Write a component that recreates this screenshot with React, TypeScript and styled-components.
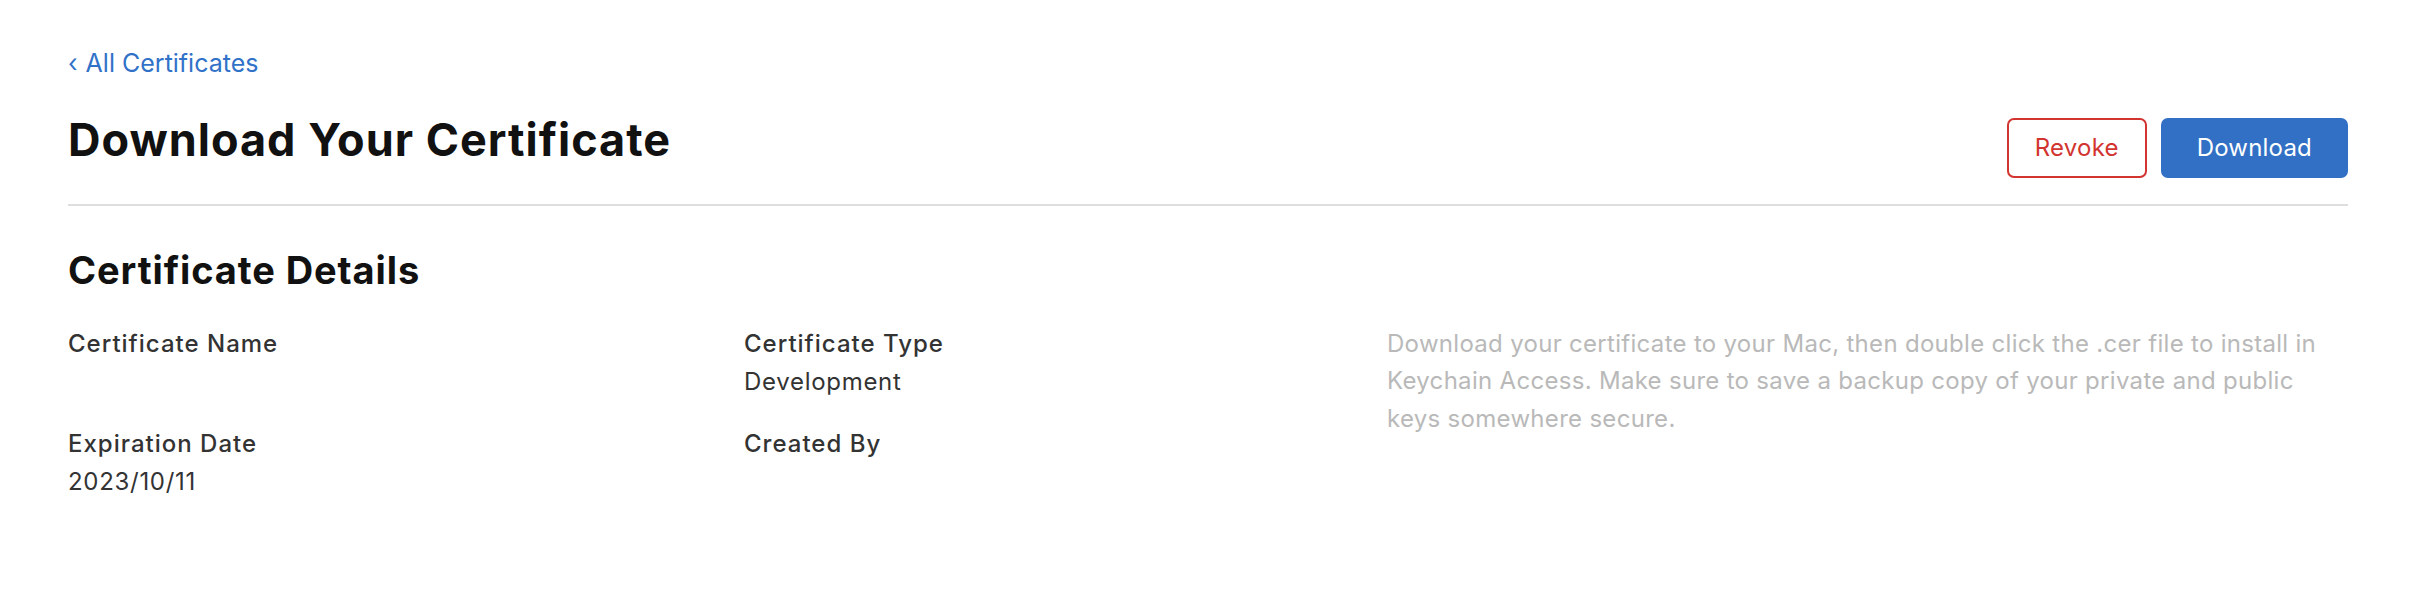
import React from "react";
import styled, { createGlobalStyle } from "styled-components";

const GlobalStyle = createGlobalStyle`
  html, body {
    margin: 0;
    padding: 0;
    background: #ffffff;
  }
  body {
    font-family: Inter, "Noto Sans", "Liberation Sans", sans-serif;
    color: #333333;
    -webkit-font-smoothing: antialiased;
  }
`;

const Page = styled.div`
  padding: 48px 76px 40px 68px;
`;

const BackLink = styled.a`
  display: inline-flex;
  align-items: baseline;
  gap: 8px;
  font-size: 25px;
  line-height: 30px;
  color: #3172c9;
  text-decoration: none;
  cursor: pointer;
`;

const Chevron = styled.span`
  font-size: 25px;
`;

const Header = styled.div`
  display: flex;
  justify-content: space-between;
  align-items: baseline;
  margin-top: 36px;
  padding-bottom: 26px;
  border-bottom: 2px solid #dedede;
`;

const Title = styled.h1`
  margin: 0;
  font-size: 45px;
  line-height: 52px;
  font-weight: 700;
  color: #111111;
  letter-spacing: 1px;
`;

const Actions = styled.div`
  display: flex;
  align-items: baseline;
  gap: 14px;
`;

const Button = styled.button<{ $primary?: boolean }>`
  display: inline-flex;
  align-items: center;
  justify-content: center;
  box-sizing: border-box;
  height: 60px;
  padding: 0 ${(p) => (p.$primary ? "34px" : "26px")};
  border-radius: 7px;
  font-family: inherit;
  font-size: 24px;
  line-height: 29px;
  letter-spacing: 0.2px;
  cursor: pointer;
  border: 2px solid ${(p) => (p.$primary ? "#3170c5" : "#d23430")};
  background: ${(p) => (p.$primary ? "#3170c5" : "#ffffff")};
  color: ${(p) => (p.$primary ? "#ffffff" : "#d23430")};
`;

const SectionTitle = styled.h2`
  margin: 42px 0 0;
  font-size: 38px;
  line-height: 44px;
  font-weight: 700;
  color: #111111;
  letter-spacing: 0.9px;
`;

const Details = styled.div`
  display: grid;
  grid-template-columns: 676px 643px 1fr;
  row-gap: 24px;
  margin-top: 33px;
`;

const Field = styled.div<{ $col: number; $row: number }>`
  grid-column: ${(p) => p.$col};
  grid-row: ${(p) => p.$row};
  display: flex;
  flex-direction: column;
  font-size: 24px;
  line-height: 38px;
`;

const Label = styled.div`
  font-weight: 500;
  color: #333333;
  letter-spacing: 1px;
`;

const Value = styled.div`
  color: #333333;
  letter-spacing: 0.7px;
`;

const Note = styled.p`
  grid-column: 3;
  grid-row: 1 / span 2;
  margin: 0;
  font-size: 24px;
  line-height: 37.5px;
  letter-spacing: 0.3px;
  color: #b9b9b9;
`;

export default function App() {
  return (
    <>
      <GlobalStyle />
      <Page>
        <BackLink>
          <Chevron>‹</Chevron>
          All Certificates
        </BackLink>
        <Header>
          <Title>Download Your Certificate</Title>
          <Actions>
            <Button>Revoke</Button>
            <Button $primary>Download</Button>
          </Actions>
        </Header>
        <SectionTitle>Certificate Details</SectionTitle>
        <Details>
          <Field $col={1} $row={1}>
            <Label>Certificate Name</Label>
          </Field>
          <Field $col={2} $row={1}>
            <Label>Certificate Type</Label>
            <Value>Development</Value>
          </Field>
          <Note>
            Download your certificate to your Mac, then double click the .cer file to install in
            Keychain Access. Make sure to save a backup copy of your private and public keys
            somewhere secure.
          </Note>
          <Field $col={1} $row={2}>
            <Label>Expiration Date</Label>
            <Value>2023/10/11</Value>
          </Field>
          <Field $col={2} $row={2}>
            <Label>Created By</Label>
          </Field>
        </Details>
      </Page>
    </>
  );
}
